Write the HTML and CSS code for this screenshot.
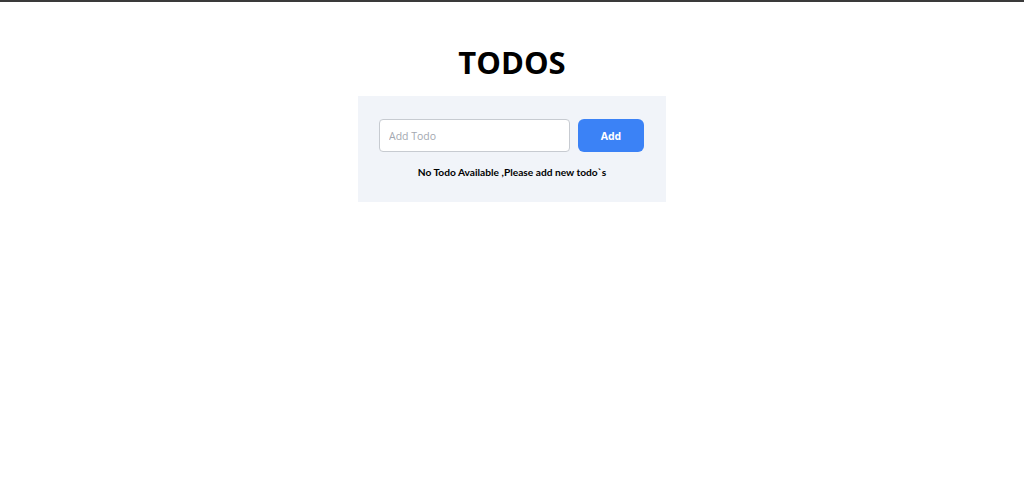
FILE: index.html
```html
<!DOCTYPE html>
<html lang="en">
<head>
<meta charset="utf-8">
<title>Todos</title>
<link rel="stylesheet" href="styles.css">
</head>
<body>
<div class="page">
  <h1 class="title">TODOS</h1>
  <div class="card">
    <form class="add-form" onsubmit="return false">
      <input class="todo-input" type="text" placeholder="Add Todo">
      <button class="add-btn" type="submit">Add</button>
    </form>
    <p class="empty">No Todo Available ,Please add new todo`s</p>
  </div>
</div>
</body>
</html>
```
FILE: styles.css
```css
* { box-sizing: border-box; }
html, body { margin: 0; padding: 0; }
body {
  font-family: "Open Sans", "Noto Sans", sans-serif;
  background: #fff;
  color: #000;
  border-top: 2px solid #3a3a3a;
  min-height: 100vh;
}
.page {
  display: flex;
  flex-direction: column;
  align-items: center;
  padding-top: 40px;
}
.title {
  margin: 0 0 14px;
  font-size: 31px;
  line-height: 40px;
  font-weight: 700;
}
.card {
  width: 308px;
  background: #f1f4f9;
  padding: 23px 21px 23px;
  display: flex;
  flex-direction: column;
  align-items: center;
}
.add-form {
  display: flex;
  gap: 8px;
  width: 100%;
  margin: 0;
}
.todo-input {
  width: 191px;
  height: 33px;
  border: 1px solid #c7cbd1;
  border-radius: 4px;
  padding: 0 9px;
  font-family: inherit;
  font-size: 10.5px;
  background: #fff;
  outline: none;
}
.todo-input::placeholder { color: #a3a8b0; }
.add-btn {
  width: 66px;
  height: 33px;
  border: 0;
  border-radius: 6px;
  background: #3b82f6;
  color: #fff;
  font-family: inherit;
  font-weight: 700;
  font-size: 10.5px;
}
.empty {
  margin: 13px 0 0;
  font-family: Lato, "Open Sans", sans-serif;
  font-size: 10.2px;
  line-height: 14px;
  font-weight: 700;
}
```
